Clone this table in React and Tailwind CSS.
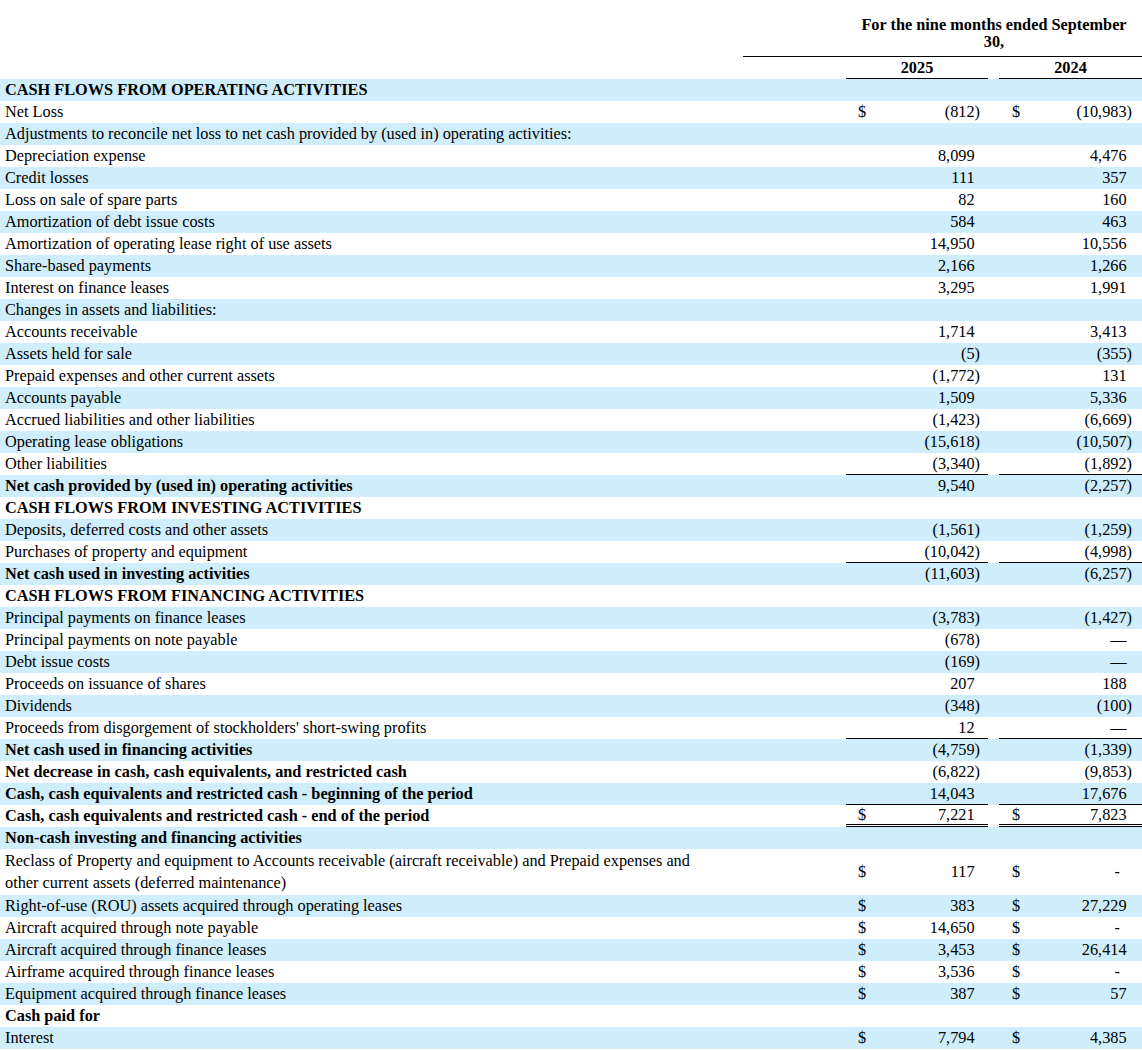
import React from "react";

const rows = [
  { label: "CASH FLOWS FROM OPERATING ACTIVITIES", bold: true },
  { label: "Net Loss", a: "(812)", b: "(10,983)", dollar: true },
  { label: "Adjustments to reconcile net loss to net cash provided by (used in) operating activities:" },
  { label: "Depreciation expense", a: "8,099", b: "4,476" },
  { label: "Credit losses", a: "111", b: "357" },
  { label: "Loss on sale of spare parts", a: "82", b: "160" },
  { label: "Amortization of debt issue costs", a: "584", b: "463" },
  { label: "Amortization of operating lease right of use assets", a: "14,950", b: "10,556" },
  { label: "Share-based payments", a: "2,166", b: "1,266" },
  { label: "Interest on finance leases", a: "3,295", b: "1,991" },
  { label: "Changes in assets and liabilities:" },
  { label: "Accounts receivable", a: "1,714", b: "3,413" },
  { label: "Assets held for sale", a: "(5)", b: "(355)" },
  { label: "Prepaid expenses and other current assets", a: "(1,772)", b: "131" },
  { label: "Accounts payable", a: "1,509", b: "5,336" },
  { label: "Accrued liabilities and other liabilities", a: "(1,423)", b: "(6,669)" },
  { label: "Operating lease obligations", a: "(15,618)", b: "(10,507)" },
  { label: "Other liabilities", a: "(3,340)", b: "(1,892)", line: "single" },
  { label: "Net cash provided by (used in) operating activities", a: "9,540", b: "(2,257)", bold: true },
  { label: "CASH FLOWS FROM INVESTING ACTIVITIES", bold: true },
  { label: "Deposits, deferred costs and other assets", a: "(1,561)", b: "(1,259)" },
  { label: "Purchases of property and equipment", a: "(10,042)", b: "(4,998)", line: "single" },
  { label: "Net cash used in investing activities", a: "(11,603)", b: "(6,257)", bold: true },
  { label: "CASH FLOWS FROM FINANCING ACTIVITIES", bold: true },
  { label: "Principal payments on finance leases", a: "(3,783)", b: "(1,427)" },
  { label: "Principal payments on note payable", a: "(678)", b: "—" },
  { label: "Debt issue costs", a: "(169)", b: "—" },
  { label: "Proceeds on issuance of shares", a: "207", b: "188" },
  { label: "Dividends", a: "(348)", b: "(100)" },
  { label: "Proceeds from disgorgement of stockholders' short-swing profits", a: "12", b: "—", line: "single" },
  { label: "Net cash used in financing activities", a: "(4,759)", b: "(1,339)", bold: true },
  { label: "Net decrease in cash, cash equivalents, and restricted cash", a: "(6,822)", b: "(9,853)", bold: true },
  { label: "Cash, cash equivalents and restricted cash - beginning of the period", a: "14,043", b: "17,676", bold: true, line: "single" },
  { label: "Cash, cash equivalents and restricted cash - end of the period", a: "7,221", b: "7,823", bold: true, dollar: true, line: "double" },
  { label: "Non-cash investing and financing activities", bold: true },
  {
    label: "Reclass of Property and equipment to Accounts receivable (aircraft receivable) and Prepaid expenses and",
    label2: "other current assets (deferred maintenance)",
    a: "117",
    b: "-",
    dollar: true,
  },
  { label: "Right-of-use (ROU) assets acquired through operating leases", a: "383", b: "27,229", dollar: true },
  { label: "Aircraft acquired through note payable", a: "14,650", b: "-", dollar: true },
  { label: "Aircraft acquired through finance leases", a: "3,453", b: "26,414", dollar: true },
  { label: "Airframe acquired through finance leases", a: "3,536", b: "-", dollar: true },
  { label: "Equipment acquired through finance leases", a: "387", b: "57", dollar: true },
  { label: "Cash paid for", bold: true },
  { label: "Interest", a: "7,794", b: "4,385", dollar: true },
];

const Value = ({ v }) => {
  if (v === undefined) return <span />;
  if (v === "-") return <span className="pr-[12px]">-</span>;
  const closes = v.endsWith(")");
  return (
    <span>
      {v}
      {!closes && <span className="invisible">)</span>}
    </span>
  );
};

const Cell = ({ v, dollar, line, width, pl, pr }) => {
  const border =
    line === "single"
      ? "border-b border-black"
      : line === "double"
      ? "border-b-[3px] border-double border-black"
      : "";
  return (
    <div className={`flex h-full items-center justify-between ${width} ${pl} ${pr} ${border}`}>
      <span>{dollar ? "$" : ""}</span>
      <Value v={v} />
    </div>
  );
};

export default function App() {
  return (
    <div
      className="w-[1142px] bg-white text-[16.3px] leading-[22px] text-black"
      style={{ fontFamily: '"Liberation Serif", "Times New Roman", serif' }}
    >
      {/* header */}
      <div className="flex h-[57px]">
        <div className="w-[743px]" />
        <div className="flex w-[399px] border-b border-black pl-[103px]">
          <div className="w-[296px] pt-[16px] text-center font-bold leading-[17px]">
            For the nine months ended September
            <br />
            30,
          </div>
        </div>
      </div>
      <div className="flex h-[22px] font-bold">
        <div className="w-[846px]" />
        <div className="w-[142px] border-b border-black text-center">2025</div>
        <div className="w-[11px]" />
        <div className="w-[143px] border-b border-black text-center">2024</div>
      </div>

      {rows.map((r, i) => (
        <div
          key={i}
          className={`flex items-center ${r.label2 ? "h-[46px]" : "h-[22px]"} ${
            i % 2 === 0 ? "bg-[#cfedfa]" : "bg-white"
          }`}
        >
          <div className={`w-[743px] whitespace-nowrap pl-[5px] ${r.bold ? "font-bold" : ""}`}>
            {r.label}
            {r.label2 && (
              <>
                <br />
                {r.label2}
              </>
            )}
          </div>
          <div className="w-[103px]" />
          <Cell v={r.a} dollar={r.dollar} line={r.line} width="w-[142px]" pl="pl-[12px]" pr="pr-[8px]" />
          <div className="w-[11px]" />
          <Cell v={r.b} dollar={r.dollar} line={r.line} width="w-[143px]" pl="pl-[13px]" pr="pr-[10px]" />
        </div>
      ))}
    </div>
  );
}
